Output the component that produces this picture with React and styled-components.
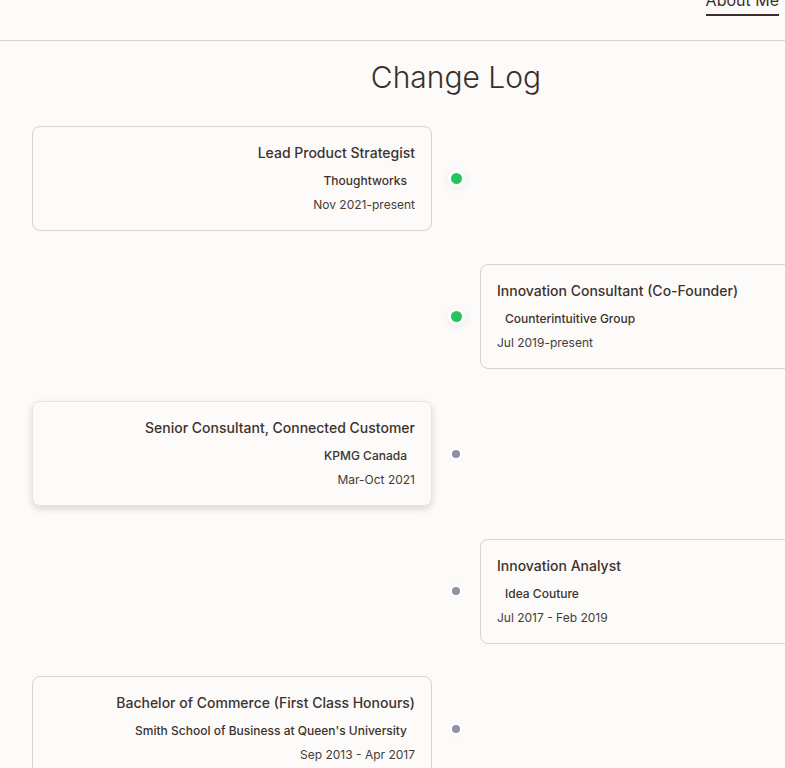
import React from "react";
import styled, { createGlobalStyle } from "styled-components";

const entries = [
  { side: "left", title: "Lead Product Strategist", org: "Thoughtworks", date: "Nov 2021-present", current: true },
  { side: "right", title: "Innovation Consultant (Co-Founder)", org: "Counterintuitive Group", date: "Jul 2019-present", current: true },
  { side: "left", title: "Senior Consultant, Connected Customer", org: "KPMG Canada", date: "Mar-Oct 2021", raised: true },
  { side: "right", title: "Innovation Analyst", org: "Idea Couture", date: "Jul 2017 - Feb 2019" },
  { side: "left", title: "Bachelor of Commerce (First Class Honours)", org: "Smith School of Business at Queen's University", date: "Sep 2013 - Apr 2017" },
];

const GlobalStyle = createGlobalStyle`
  body {
    margin: 0;
    background: #fcfbf9;
    font-family: Inter, "Noto Sans", sans-serif;
    color: #3b2f2a;
  }
`;

export default function App() {
  return (
    <>
      <GlobalStyle />
      <Header>
        <NavLink>About Me</NavLink>
      </Header>
      <Main>
        <Title>Change Log</Title>
        <Timeline>
          {entries.map((e) => (
            <Row key={e.title}>
              <Slot>
                {e.side === "left" && <Entry {...e} />}
              </Slot>
              <DotCell>
                <Dot $current={e.current} />
              </DotCell>
              <Slot>
                {e.side === "right" && <Entry {...e} />}
              </Slot>
            </Row>
          ))}
        </Timeline>
      </Main>
    </>
  );
}

const Entry = ({ side, title, org, date, raised }) => (
  <Card $align={side === "left" ? "right" : "left"} $raised={raised}>
    <CardTitle>{title}</CardTitle>
    <Org>{org}</Org>
    <DateText>{date}</DateText>
  </Card>
);

const Header = styled.header`
  height: 40px;
  border-bottom: 1px solid #d6d3d1;
  display: flex;
  justify-content: flex-end;
  align-items: flex-start;
  padding-right: 6px;
  overflow: hidden;
`;

const NavLink = styled.a`
  display: block;
  margin-top: -10px;
  font-size: 16px;
  line-height: 20px;
  padding-bottom: 4px;
  border-bottom: 2px solid #3b2f2a;
  color: #3b2f2a;
`;

const Main = styled.main`
  width: 848px;
  margin-left: 32px;
  padding-bottom: 40px;
`;

const Title = styled.h1`
  margin: 18px 0 31px;
  font-size: 30px;
  line-height: 36px;
  font-weight: 300;
  text-align: center;
  color: #3b2f2a;
`;

const Timeline = styled.div`
  display: flex;
  flex-direction: column;
  gap: 32.5px;
`;

const Row = styled.div`
  display: grid;
  grid-template-columns: 400px 48px 400px;
  align-items: center;
`;

const Slot = styled.div`
  min-height: 1px;
`;

const DotCell = styled.div`
  display: flex;
  justify-content: center;
  align-items: center;
`;

const Dot = styled.span`
  width: ${(p) => (p.$current ? "11px" : "8px")};
  height: ${(p) => (p.$current ? "11px" : "8px")};
  border-radius: 50%;
  background: ${(p) => (p.$current ? "#22c55e" : "#8e92a2")};
  box-shadow: 0 0 0 3px #fff,
    ${(p) => (p.$current ? "0 2px 8px 3px rgba(0,0,0,0.08)" : "0 0 4px 3px rgba(0,0,0,0.03)")};
`;

const Card = styled.div`
  box-sizing: border-box;
  width: 400px;
  padding: 16px 16px 17px;
  border: 1px solid ${(p) => (p.$raised ? "#e7e5e3" : "#d6d3d1")};
  border-radius: 8px;
  background: #fcfbf9;
  text-align: ${(p) => p.$align};
  box-shadow: ${(p) => (p.$raised ? "0 3px 7px rgba(0,0,0,0.14)" : "none")};
`;

const CardTitle = styled.div`
  font-size: 14px;
  line-height: 20px;
  font-weight: 500;
  color: #3d322d;
`;

const Org = styled.div`
  margin: 10px 8px 0;
  font-size: 12px;
  line-height: 16px;
  font-weight: 500;
  color: #3d322d;
`;

const DateText = styled.div`
  margin-top: 8px;
  font-size: 12px;
  line-height: 16px;
  color: #463c37;
`;
